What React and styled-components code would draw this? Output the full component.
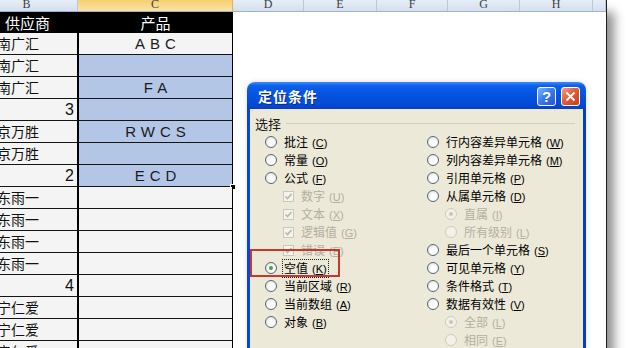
import styled, { createGlobalStyle } from "styled-components";

const GlobalStyle = createGlobalStyle`
  html, body {
    margin: 0;
    padding: 0;
    background: #fff;
    overflow: hidden;
  }
  body {
    font-family: "Noto Sans CJK SC", "Liberation Sans", sans-serif;
  }
`;

const Page = styled.div`
  width: 628px;
  height: 348px;
  overflow: hidden;
  background: #fff;
`;

const Sheet = styled.div`
  position: relative;
  box-sizing: border-box;
  width: 607px;
  height: 370px;
  background: #fff;
  border-right: 1px solid #1e1e1e;
  box-shadow: 7px 12px 10px rgba(0, 0, 0, 0.45);
`;

const ColHeaders = styled.div`
  display: flex;
  height: 12px;
  box-sizing: border-box;
  border-bottom: 1px solid #9eb3cc;
`;

const ColHead = styled.div`
  flex: none;
  box-sizing: border-box;
  width: ${(p) => p.$w}px;
  height: 11px;
  padding-right: ${(p) => p.$padR || 0}px;
  border-right: 1px solid ${(p) => (p.$sel ? "#e2b44f" : "#b9c8db")};
  background: ${(p) =>
    p.$sel
      ? "linear-gradient(#f7cf73, #fbe3a0)"
      : "linear-gradient(#e6edf7, #d5e0ee)"};
  color: #3a3f48;
  font-family: "Liberation Serif", serif;
  font-size: 12px;
  line-height: 8px;
  text-align: center;
  overflow: hidden;
`;

const Table = styled.div`
  display: flex;
  flex-direction: column;
  width: 233px;
`;

const HeadRow = styled.div`
  display: flex;
  height: 21px;
  background: #000;
  color: #fff;
  font-size: 15px;
  line-height: 21px;
`;

const HeadCell = styled.div`
  flex: none;
  width: ${(p) => p.$w}px;
  padding-left: ${(p) => p.$padL || 0}px;
  box-sizing: border-box;
  text-align: ${(p) => (p.$center ? "center" : "left")};
`;

const Row = styled.div`
  display: flex;
  height: 22px;
`;

const BCell = styled.div`
  flex: none;
  box-sizing: border-box;
  width: 78px;
  border-right: 1px solid #000;
  border-bottom: 1px solid #151515;
  background: #f4f4f4;
  color: #111;
  font-size: ${(p) => (p.$num ? 16 : 14)}px;
  font-family: ${(p) =>
    p.$num ? '"Liberation Sans", sans-serif' : '"Noto Sans CJK SC", sans-serif'};
  line-height: 21px;
  text-align: ${(p) => (p.$num ? "right" : "left")};
  text-indent: ${(p) => (p.$num ? 0 : -3)}px;
  padding-right: ${(p) => (p.$num ? 3 : 0)}px;
  white-space: nowrap;
  overflow: hidden;
`;

const CCell = styled.div`
  position: relative;
  flex: none;
  box-sizing: border-box;
  width: 155px;
  border-left: 1px solid #000;
  border-right: 1px solid #000;
  border-bottom: 1px solid #151515;
  background: ${(p) => (p.$sel ? "#b4c6e6" : "#f4f4f4")};
  color: #1b1b1b;
  font-family: "Liberation Sans", sans-serif;
  font-size: 15px;
  letter-spacing: 5px;
  padding-left: 5px;
  line-height: 21px;
  text-align: center;

  ${(p) =>
    p.$handle &&
    `
    &::after {
      content: "";
      position: absolute;
      right: -4px;
      bottom: -4px;
      width: 4px;
      height: 4px;
      background: #000;
      border: 1px solid #fff;
    }
  `}
`;

const Dialog = styled.div`
  position: absolute;
  left: 247px;
  top: 82px;
  width: 339px;
  height: 290px;
  display: flex;
  flex-direction: column;
  box-shadow: 0 0 4px rgba(120, 140, 180, 0.35);
  border-radius: 8px 8px 0 0;
`;

const TitleBar = styled.div`
  display: flex;
  align-items: center;
  justify-content: space-between;
  height: 27px;
  padding: 0 6px 0 11px;
  border-radius: 8px 8px 0 0;
  background: linear-gradient(
    #3d8df7 0%,
    #0b5fe9 14%,
    #0555e3 45%,
    #0349d6 85%,
    #0a3fbf 100%
  );
`;

const Title = styled.div`
  color: #fff;
  font-weight: bold;
  font-size: 14px;
  letter-spacing: 1px;
  text-shadow: 1px 1px 0 #0b2a86;
`;

const TitleButtons = styled.div`
  display: flex;
  gap: 5px;
  margin-top: 2px;
`;

const TitleButton = styled.div`
  display: flex;
  align-items: center;
  justify-content: center;
  width: 19px;
  height: 19px;
  box-sizing: border-box;
  border: 1px solid #fff;
  border-radius: 3px;
  color: #fff;
  font-family: "Liberation Sans", sans-serif;
  font-weight: bold;
  font-size: 15px;
  background: ${(p) =>
    p.$close
      ? "linear-gradient(135deg, #f1a488 0%, #e25c37 45%, #c63d1c 100%)"
      : "linear-gradient(135deg, #7fb2fb 0%, #3b7df0 45%, #1d55d6 100%)"};
`;

const Body = styled.div`
  flex: 1;
  background: #ece9d8;
  border-left: 3px solid #0a45d6;
  border-right: 3px solid #0a3cc4;
  padding: 7px 8px 0 5px;
`;

const Legend = styled.div`
  display: flex;
  align-items: center;
  height: 14px;
  font-size: 13px;
  color: #1a1a1a;
`;

const LegendLine = styled.div`
  flex: 1;
  height: 1px;
  margin-left: 5px;
  background: #d0d0bf;
`;

const Options = styled.div`
  display: grid;
  grid-template-columns: 162px 1fr;
  margin-top: 3px;
  padding-left: 10px;
`;

const Column = styled.div`
  display: flex;
  flex-direction: column;
`;

const Option = styled.div`
  display: flex;
  align-items: center;
  gap: 5px;
  height: 18px;
  padding-left: ${(p) => p.$indent || 0}px;
  font-size: 12px;
  color: ${(p) => (p.$disabled ? "#b3b0a0" : "#000")};
  white-space: nowrap;
`;

const Radio = styled.span`
  position: relative;
  flex: none;
  width: 12px;
  height: 12px;
  box-sizing: border-box;
  border-radius: 50%;
  border: 1px solid ${(p) => (p.$disabled ? "#cfccbd" : "#55657a")};
  background: ${(p) =>
    p.$disabled
      ? "#f3f1e8"
      : "radial-gradient(circle at 60% 65%, #ffffff 30%, #dcdcd4 100%)"};

  ${(p) =>
    p.$checked &&
    `
    &::after {
      content: "";
      position: absolute;
      left: 3px;
      top: 3px;
      width: 4px;
      height: 4px;
      border-radius: 50%;
      background: ${p.$disabled ? "#cac7b8" : "#3aa83a"};
    }
  `}
`;

const Check = styled.span`
  display: flex;
  align-items: center;
  justify-content: center;
  flex: none;
  width: 11px;
  height: 11px;
  box-sizing: border-box;
  border: 1px solid #cac8bb;
  background: #f4f3ee;
`;

const Label = styled.span`
  padding: 0 1px;
  border: 1px dotted ${(p) => (p.$focus ? "#222" : "transparent")};
  line-height: 15px;
`;

const Key = styled.span`
  margin-left: 4px;
  font-size: 11px;
  font-family: "Liberation Sans", sans-serif;

  u {
    text-underline-offset: 1px;
  }
`;

const Highlight = styled.div`
  position: absolute;
  left: 3px;
  top: 167px;
  width: 90px;
  height: 28px;
  box-sizing: border-box;
  border: 2px solid #c5392c;
`;

const COLS = [
  { l: "B", w: 78, padR: 24 },
  { l: "C", w: 155, sel: true },
  { l: "D", w: 71 },
  { l: "E", w: 73 },
  { l: "F", w: 71 },
  { l: "G", w: 72 },
  { l: "H", w: 73 },
  { l: "", w: 13 },
];

const ROWS = [
  { b: "南广汇", c: "ABC", sel: false },
  { b: "南广汇", c: "", sel: true },
  { b: "南广汇", c: "FA", sel: true },
  { b: "3", num: true, c: "", sel: true },
  { b: "京万胜", c: "RWCS", sel: true },
  { b: "京万胜", c: "", sel: true },
  { b: "2", num: true, c: "ECD", sel: true, handle: true },
  { b: "东雨一" },
  { b: "东雨一" },
  { b: "东雨一" },
  { b: "东雨一" },
  { b: "4", num: true },
  { b: "宁仁爱" },
  { b: "宁仁爱" },
  { b: "宁仁爱" },
];

const LEFT = [
  { t: "批注", k: "C" },
  { t: "常量", k: "O" },
  { t: "公式", k: "F" },
  { t: "数字", k: "U", check: true },
  { t: "文本", k: "X", check: true },
  { t: "逻辑值", k: "G", check: true },
  { t: "错误", k: "E", check: true },
  { t: "空值", k: "K", checked: true, focus: true },
  { t: "当前区域", k: "R" },
  { t: "当前数组", k: "A" },
  { t: "对象", k: "B" },
];

const RIGHT = [
  { t: "行内容差异单元格", k: "W" },
  { t: "列内容差异单元格", k: "M" },
  { t: "引用单元格", k: "P" },
  { t: "从属单元格", k: "D" },
  { t: "直属", k: "I", sub: true, checked: true },
  { t: "所有级别", k: "L", sub: true },
  { t: "最后一个单元格", k: "S" },
  { t: "可见单元格", k: "Y" },
  { t: "条件格式", k: "T" },
  { t: "数据有效性", k: "V" },
  { t: "全部", k: "L", sub: true, checked: true },
  { t: "相同", k: "E", sub: true },
];

function OptionItem({ item }) {
  const disabled = item.check || item.sub;
  return (
    <Option $indent={disabled ? 18 : 0} $disabled={disabled}>
      {item.check ? (
        <Check>
          <svg width="9" height="9" viewBox="0 0 9 9">
            <path d="M1.5 4.5 L3.5 6.5 L7.5 2" fill="none" stroke="#b9b6a6" strokeWidth="1.6" />
          </svg>
        </Check>
      ) : (
        <Radio $checked={item.checked} $disabled={disabled} />
      )}
      <Label $focus={item.focus}>
        {item.t}
        <Key>
          (<u>{item.k}</u>)
        </Key>
      </Label>
    </Option>
  );
}

export default function App() {
  return (
    <Page>
      <GlobalStyle />
      <Sheet>
        <ColHeaders>
          {COLS.map((c, i) => (
            <ColHead key={i} $w={c.w} $padR={c.padR} $sel={c.sel}>
              {c.l}
            </ColHead>
          ))}
        </ColHeaders>

        <Table>
          <HeadRow>
            <HeadCell $w={78} $padL={5}>供应商</HeadCell>
            <HeadCell $w={155} $center>产品</HeadCell>
          </HeadRow>
          {ROWS.map((r, i) => (
            <Row key={i}>
              <BCell $num={r.num}>{r.b}</BCell>
              <CCell $sel={r.sel} $handle={r.handle}>
                {r.c}
              </CCell>
            </Row>
          ))}
        </Table>

        <Dialog>
          <TitleBar>
            <Title>定位条件</Title>
            <TitleButtons>
              <TitleButton>?</TitleButton>
              <TitleButton $close>
                <svg width="11" height="11" viewBox="0 0 11 11">
                  <path d="M1.5 1.5 L9.5 9.5 M9.5 1.5 L1.5 9.5" stroke="#fff" strokeWidth="2" />
                </svg>
              </TitleButton>
            </TitleButtons>
          </TitleBar>
          <Body>
            <Legend>
              选择
              <LegendLine />
            </Legend>
            <Options>
              <Column>
                {LEFT.map((it, i) => (
                  <OptionItem key={i} item={it} />
                ))}
              </Column>
              <Column>
                {RIGHT.map((it, i) => (
                  <OptionItem key={i} item={it} />
                ))}
              </Column>
            </Options>
          </Body>
          <Highlight />
        </Dialog>
      </Sheet>
    </Page>
  );
}
